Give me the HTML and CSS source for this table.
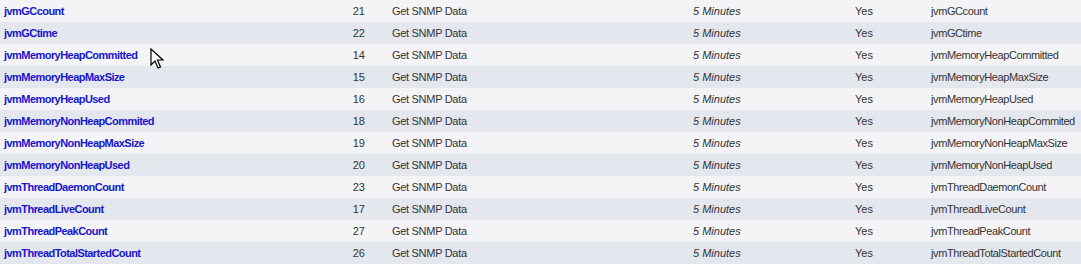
FILE: index.html
```html
<!DOCTYPE html>
<html>
<head>
<meta charset="utf-8">
<link rel="stylesheet" href="styles.css">
</head>
<body>
<table class="grid">
<tbody>
<tr><td class="name"><a href="#">jvmGCcount</a></td><td class="num">21</td><td class="type">Get SNMP Data</td><td class="freq">5 Minutes</td><td class="act">Yes</td><td class="ds">jvmGCcount</td></tr>
<tr><td class="name"><a href="#">jvmGCtime</a></td><td class="num">22</td><td class="type">Get SNMP Data</td><td class="freq">5 Minutes</td><td class="act">Yes</td><td class="ds">jvmGCtime</td></tr>
<tr><td class="name"><a href="#">jvmMemoryHeapCommitted</a></td><td class="num">14</td><td class="type">Get SNMP Data</td><td class="freq">5 Minutes</td><td class="act">Yes</td><td class="ds">jvmMemoryHeapCommitted</td></tr>
<tr><td class="name"><a href="#">jvmMemoryHeapMaxSize</a></td><td class="num">15</td><td class="type">Get SNMP Data</td><td class="freq">5 Minutes</td><td class="act">Yes</td><td class="ds">jvmMemoryHeapMaxSize</td></tr>
<tr><td class="name"><a href="#">jvmMemoryHeapUsed</a></td><td class="num">16</td><td class="type">Get SNMP Data</td><td class="freq">5 Minutes</td><td class="act">Yes</td><td class="ds">jvmMemoryHeapUsed</td></tr>
<tr><td class="name"><a href="#">jvmMemoryNonHeapCommited</a></td><td class="num">18</td><td class="type">Get SNMP Data</td><td class="freq">5 Minutes</td><td class="act">Yes</td><td class="ds">jvmMemoryNonHeapCommited</td></tr>
<tr><td class="name"><a href="#">jvmMemoryNonHeapMaxSize</a></td><td class="num">19</td><td class="type">Get SNMP Data</td><td class="freq">5 Minutes</td><td class="act">Yes</td><td class="ds">jvmMemoryNonHeapMaxSize</td></tr>
<tr><td class="name"><a href="#">jvmMemoryNonHeapUsed</a></td><td class="num">20</td><td class="type">Get SNMP Data</td><td class="freq">5 Minutes</td><td class="act">Yes</td><td class="ds">jvmMemoryNonHeapUsed</td></tr>
<tr><td class="name"><a href="#">jvmThreadDaemonCount</a></td><td class="num">23</td><td class="type">Get SNMP Data</td><td class="freq">5 Minutes</td><td class="act">Yes</td><td class="ds">jvmThreadDaemonCount</td></tr>
<tr><td class="name"><a href="#">jvmThreadLiveCount</a></td><td class="num">17</td><td class="type">Get SNMP Data</td><td class="freq">5 Minutes</td><td class="act">Yes</td><td class="ds">jvmThreadLiveCount</td></tr>
<tr><td class="name"><a href="#">jvmThreadPeakCount</a></td><td class="num">27</td><td class="type">Get SNMP Data</td><td class="freq">5 Minutes</td><td class="act">Yes</td><td class="ds">jvmThreadPeakCount</td></tr>
<tr><td class="name"><a href="#">jvmThreadTotalStartedCount</a></td><td class="num">26</td><td class="type">Get SNMP Data</td><td class="freq">5 Minutes</td><td class="act">Yes</td><td class="ds">jvmThreadTotalStartedCount</td></tr>
</tbody>
</table>
<svg class="cursor" width="14" height="22" viewBox="0 0 14 22" xmlns="http://www.w3.org/2000/svg">
<path d="M1 1 L1 17 L5 13 L8 20 L10.5 19 L7.5 12 L13 12 Z" fill="#fff" stroke="#000" stroke-width="1.2" stroke-linejoin="miter"/>
</svg>
</body>
</html>
```

FILE: styles.css
```css
html, body {
  margin: 0;
  padding: 0;
  background: #f4f4f6;
}
body {
  font-family: "Liberation Sans", Arial, sans-serif;
  font-size: 11px;
  color: #333;
  position: relative;
}
.grid {
  width: 1081px;
  border-collapse: collapse;
  table-layout: fixed;
}
.grid tr {
  height: 22px;
}
.grid tr:nth-child(odd) {
  background: #f4f4f6;
}
.grid tr:nth-child(even) {
  background: #e5e7ef;
}
.grid td {
  padding: 0;
  white-space: nowrap;
  vertical-align: middle;
}
.name {
  width: 300px;
  padding-left: 4px !important;
}
.name a {
  color: #1616cc;
  font-weight: bold;
  text-decoration: none;
  letter-spacing: -0.55px;
}
.num {
  width: 61px;
  text-align: right;
}
.type {
  width: 301px;
  padding-left: 27px !important;
  letter-spacing: -0.3px;
}
.freq {
  width: 162px;
  font-style: italic;
}
.act {
  width: 76px;
}
.ds {
  letter-spacing: -0.4px;
}
.cursor {
  position: absolute;
  left: 150px;
  top: 48px;
}
```
